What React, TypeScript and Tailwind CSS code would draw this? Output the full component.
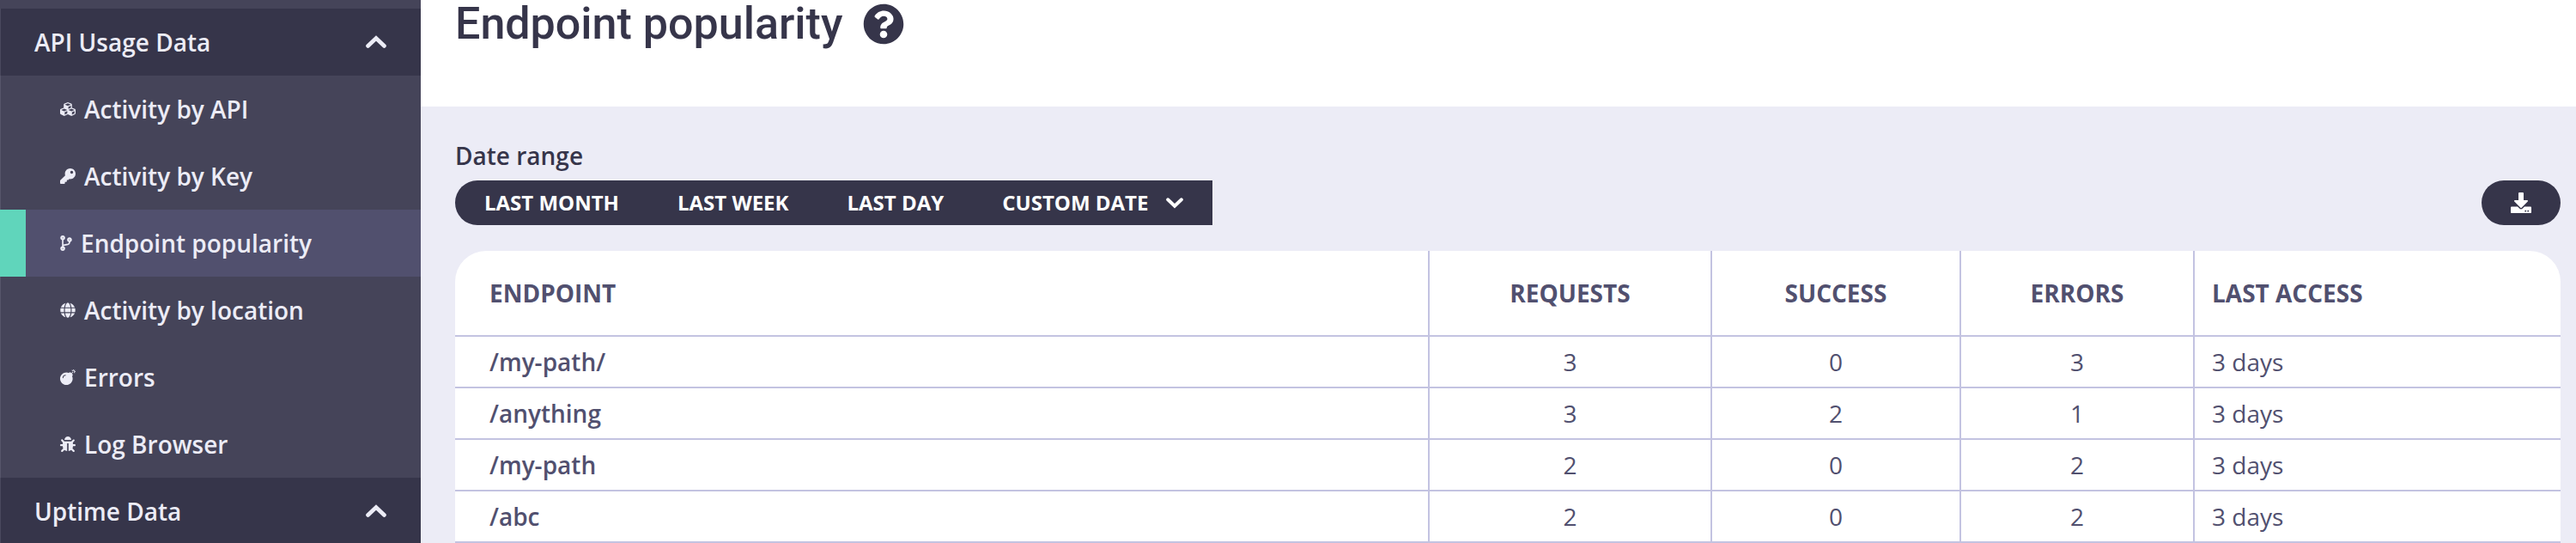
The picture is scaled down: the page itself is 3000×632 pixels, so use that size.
import React from 'react';
import {
  FaBomb,
  FaBug,
  FaCodeBranch,
  FaCubes,
  FaDownload,
  FaGlobe,
  FaKey,
  FaQuestionCircle
} from 'react-icons/fa';

const activityLinks = [
  { label: 'Activity by API', icon: FaCubes },
  { label: 'Activity by Key', icon: FaKey },
  { label: 'Endpoint popularity', icon: FaCodeBranch, active: true },
  { label: 'Activity by location', icon: FaGlobe },
  { label: 'Errors', icon: FaBomb },
  { label: 'Log Browser', icon: FaBug }
];

const ranges = ['LAST MONTH', 'LAST WEEK', 'LAST DAY'];

const endpoints = [
  { path: '/my-path/', requests: 3, success: 0, errors: 3, lastAccess: '3 days' },
  { path: '/anything', requests: 3, success: 2, errors: 1, lastAccess: '3 days' },
  { path: '/my-path', requests: 2, success: 0, errors: 2, lastAccess: '3 days' },
  { path: '/abc', requests: 2, success: 0, errors: 2, lastAccess: '3 days' }
];

function Chevron({ className }: { className: string }) {
  return (
    <svg viewBox="0 0 24 16" fill="none" className={className} aria-hidden="true">
      <path
        d="M2.5 12.5 12 3.5l9.5 9"
        stroke="currentColor"
        strokeWidth="4.6"
        strokeLinecap="round"
        strokeLinejoin="miter" />
    </svg>);

}

function SectionHeader({ title }: { title: string }) {
  return (
    <button
      type="button"
      aria-expanded="true"
      className="flex h-[78px] w-full shrink-0 items-center justify-between border-l border-[#4a495d] bg-[#36354a] pl-[39px] pr-10 text-left font-semibold">
      {title}
      <Chevron className="h-4 w-6" />
    </button>);

}

function Sidebar() {
  return (
    <nav className="flex w-[490px] shrink-0 flex-col bg-[#454459] pt-2.5 text-[28px] leading-10 text-[#ececf6]">
      <SectionHeader title="API Usage Data" />
      <ul>
        {activityLinks.map(({ label, icon: Icon, active }) => (
          <li key={label}>
            <a
              href="#"
              aria-current={active ? 'page' : undefined}
              className={`flex h-[78px] items-center gap-2.5 font-semibold ${
                active ?
                'border-l-[30px] border-[#60d5bb] bg-[#51506e] pl-10' :
                'border-l border-[#56556a] pl-[69px]'}`}>
              {/* the branch glyph is narrower than the square ones */}
              <Icon className={`h-[18px] shrink-0 ${Icon === FaCodeBranch ? 'w-[14px]' : 'w-[18px]'}`} />
              {label}
            </a>
          </li>
        ))}
      </ul>
      <SectionHeader title="Uptime Data" />
    </nav>);

}

function EndpointTable() {
  return (
    <div className="overflow-hidden rounded-t-[36px] bg-white">
      <table className="w-full table-fixed border-separate border-spacing-0 text-[28px] leading-[38px] text-[#51506f]">
        <thead>
          <tr className="h-[100px] [&>th]:border-b-2 [&>th]:border-[#c3c3e1] [&>th]:font-bold">
            <th scope="col" className="border-r-2 px-10 text-left">ENDPOINT</th>
            <th scope="col" className="w-[329px] border-r-2">REQUESTS</th>
            <th scope="col" className="w-[290px] border-r-2">SUCCESS</th>
            <th scope="col" className="w-[272px] border-r-2">ERRORS</th>
            <th scope="col" className="w-[426px] px-5 text-left">LAST ACCESS</th>
          </tr>
        </thead>
        <tbody>
          {endpoints.map((row) => (
            <tr key={row.path} className="h-[60px] [&>td]:border-b-2 [&>td]:border-[#c3c3e1]">
              <td className="border-r-2 px-10 font-semibold">{row.path}</td>
              <td className="border-r-2 text-center">{row.requests}</td>
              <td className="border-r-2 text-center">{row.success}</td>
              <td className="border-r-2 text-center">{row.errors}</td>
              <td className="px-5">{row.lastAccess}</td>
            </tr>
          ))}
        </tbody>
      </table>
    </div>);

}

export default function App() {
  return (
    <div className="flex h-screen overflow-hidden bg-[#ececf6] font-['Open_Sans',sans-serif] text-[#36354a]">
      <Sidebar />
      <main className="min-w-0 flex-1">
        <header className="flex h-[124px] items-start gap-6 bg-white px-10 pt-1">
          <h1 className="font-['Roboto',sans-serif] text-[52px] font-medium leading-[48px]">
            Endpoint popularity
          </h1>
          <button type="button" aria-label="Help">
            <FaQuestionCircle className="size-12" />
          </button>
        </header>

        <section className="pl-10 pr-[18px] pt-9">
          <p id="range-label" className="mb-2 text-[28px] font-semibold leading-[42px]">
            Date range
          </p>
          <div className="mb-[30px] flex items-center justify-between">
            <div
              role="group"
              aria-labelledby="range-label"
              className="flex h-[52px] overflow-hidden rounded-l-full bg-[#36354a] text-2xl font-bold text-white">
              {ranges.map((range) => (
                <button key={range} type="button" className="px-[34px]">
                  {range}
                </button>
              ))}
              <button type="button" className="flex items-center gap-[21px] px-[34px]">
                CUSTOM DATE
                <Chevron className="h-[14px] w-5 rotate-180" />
              </button>
            </div>
            <button
              type="button"
              aria-label="Download"
              className="flex h-[52px] items-center rounded-full bg-[#36354a] px-[34px] text-white">
              <FaDownload className="size-6" />
            </button>
          </div>
          <EndpointTable />
        </section>
      </main>
    </div>);

}
